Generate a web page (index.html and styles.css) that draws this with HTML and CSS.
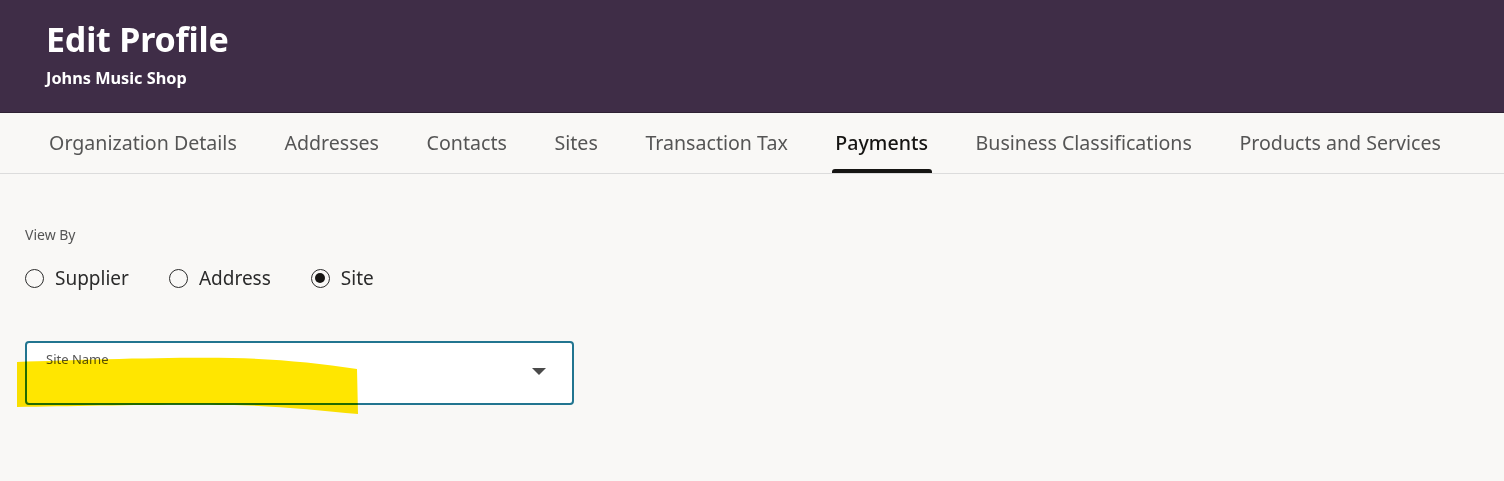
FILE: index.html
```html
<!DOCTYPE html>
<html lang="en">
<head>
    <meta charset="UTF-8">
    <meta name="viewport" content="width=device-width, initial-scale=1.0">
    <title>Edit Profile</title>
    <link rel="stylesheet" href="styles.css">
</head>
<body>
    <div class="header">
        <h1>Edit Profile</h1>
        <div class="subtitle">Johns Music Shop</div>
    </div>

    <div class="tabs">
        <div class="tab">Organization Details</div>
        <div class="tab">Addresses</div>
        <div class="tab">Contacts</div>
        <div class="tab">Sites</div>
        <div class="tab">Transaction Tax</div>
        <div class="tab active">Payments</div>
        <div class="tab">Business Classifications</div>
        <div class="tab">Products and Services</div>
    </div>

    <div class="content">
        <div class="field-label">View By</div>
        <div class="radios">
            <label class="radio"><span class="dot"></span>Supplier</label>
            <label class="radio"><span class="dot"></span>Address</label>
            <label class="radio checked"><span class="dot"></span>Site</label>
        </div>

        <div class="select">
            <div class="select-label">Site Name</div>
            <svg class="caret" width="14" height="8" viewBox="0 0 14 8"><path d="M0 0 L14 0 L7 7 Z" fill="#4a4a4a"/></svg>
        </div>
    </div>

    <!-- marker highlight drawn over the screenshot -->
    <svg class="marker" width="345" height="62" viewBox="0 0 345 62">
        <path d="M0 5 C60 3 150 0 215 1 C260 2 300 6 340 12 L341 57 C300 53 250 48 210 48 C150 47 60 49 0 50 Z" fill="#ffe600"/>
    </svg>
</body>
</html>
```

FILE: styles.css
```css
* {
    margin: 0;
    padding: 0;
    box-sizing: border-box;
}

body {
    font-family: "Noto Sans", sans-serif;
    color: #333;
    background: #f9f8f6;
    position: relative;
    height: 481px;
    overflow: hidden;
}

.header {
    background: #3f2d47;
    color: white;
    height: 113px;
    padding: 17px 46px 0;
    border-bottom: 1px solid #2e2134;
}

.header h1 {
    font-size: 34px;
    font-weight: 700;
    line-height: 44px;
    letter-spacing: -0.2px;
}

.header .subtitle {
    font-size: 16.3px;
    font-weight: 700;
    line-height: 24px;
    margin-top: 5px;
}

.tabs {
    display: flex;
    height: 61px;
    padding-left: 25.3px;
    border-bottom: 1px solid #dcdcdc;
    background: #f9f8f6;
}

.tab {
    position: relative;
    padding: 0 23.8px;
    font-size: 19.6px;
    line-height: 60px;
    color: #555;
    white-space: nowrap;
}

.tab.active {
    color: #161513;
    font-weight: 500;
}

.tab.active::after {
    content: "";
    position: absolute;
    left: 20px;
    right: 20px;
    bottom: 0;
    height: 4px;
    background: #161513;
    border-radius: 3px 3px 0 0;
}

.content {
    padding: 51px 25px 0;
}

.field-label {
    font-size: 14px;
    color: #555;
    line-height: 20px;
}

.radios {
    display: flex;
    gap: 40px;
    margin-top: 20px;
}

.radio {
    display: flex;
    align-items: center;
    gap: 11px;
    font-size: 19px;
    color: #2b2b2b;
    line-height: 26px;
}

.dot {
    width: 19px;
    height: 19px;
    border: 1.5px solid #2b2b2b;
    border-radius: 50%;
    display: flex;
    align-items: center;
    justify-content: center;
}

.radio.checked .dot::after {
    content: "";
    width: 10px;
    height: 10px;
    border-radius: 50%;
    background: #161513;
}

.select {
    position: relative;
    width: 549px;
    height: 64px;
    margin-top: 50px;
    background: white;
    border: 2px solid #227590;
    border-radius: 4px;
    padding: 7px 0 0 19px;
}

.select-label {
    font-size: 13px;
    color: #555;
    line-height: 18px;
}

.caret {
    position: absolute;
    right: 26px;
    top: 25px;
}

.marker {
    position: absolute;
    left: 17px;
    top: 357px;
    mix-blend-mode: multiply;
}
```
